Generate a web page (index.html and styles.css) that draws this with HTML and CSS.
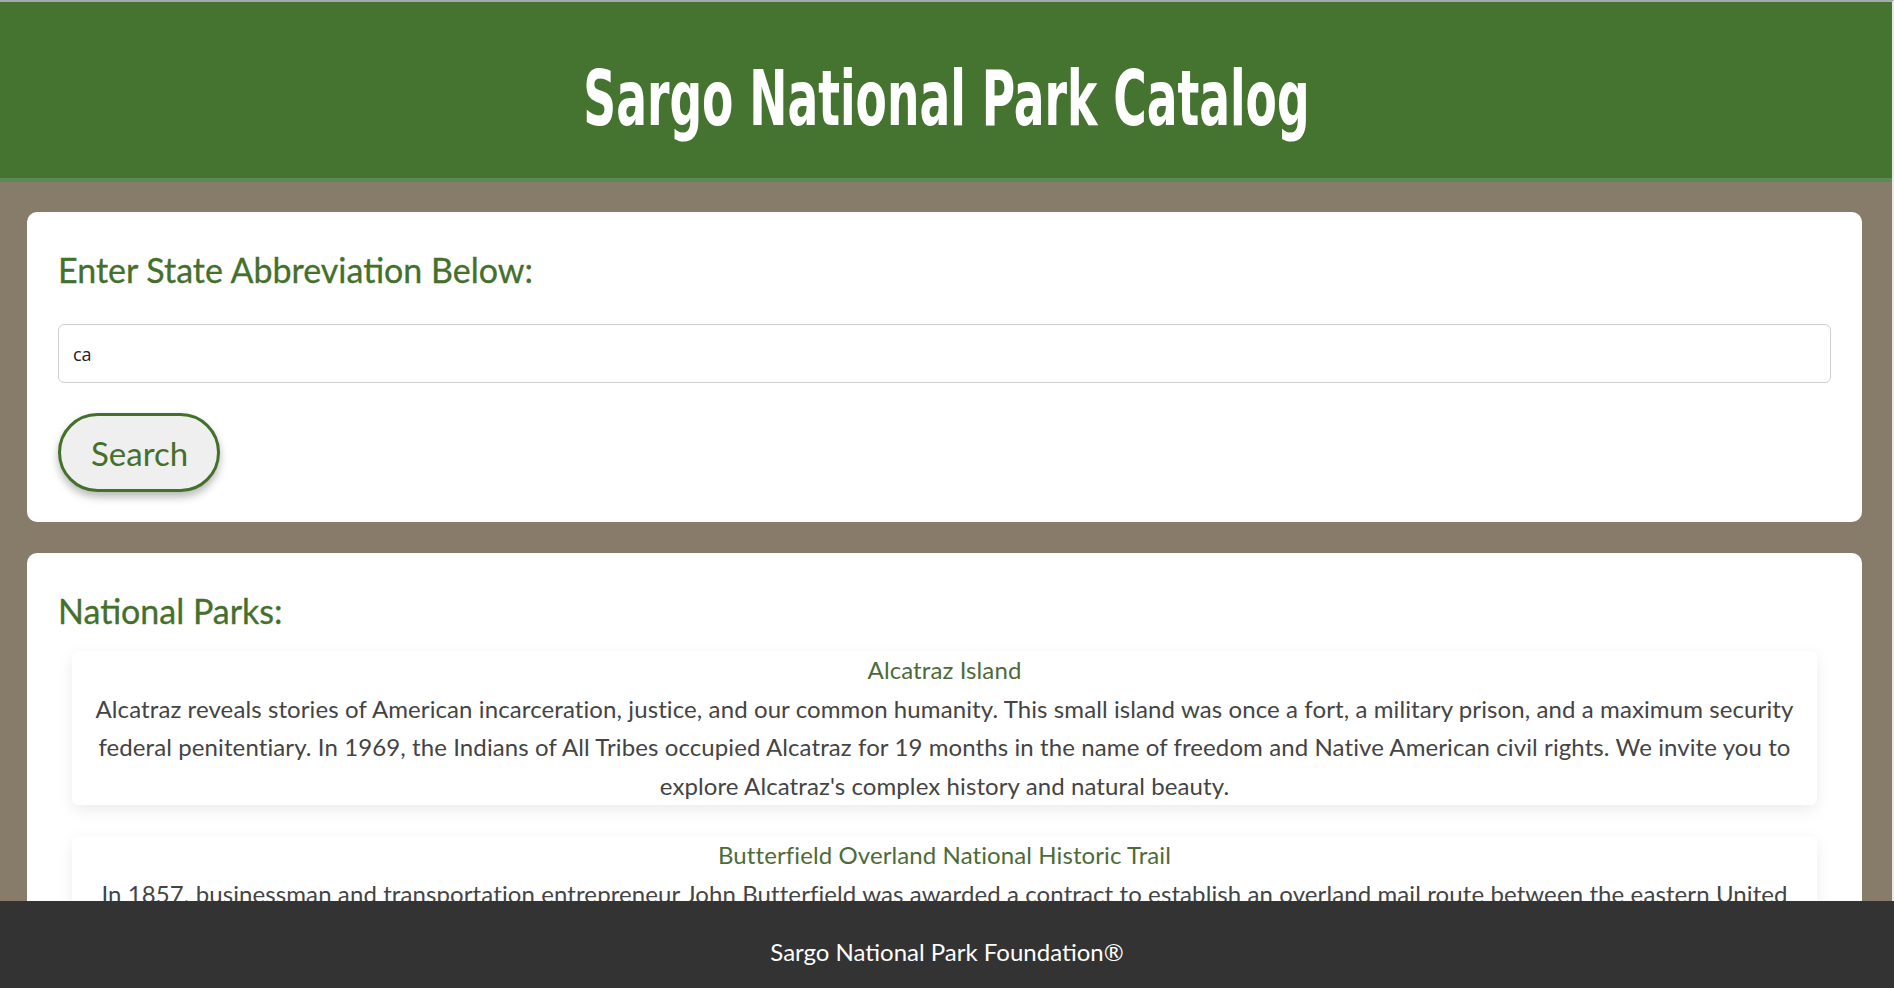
FILE: index.html
```html
<!DOCTYPE html>
<html lang="en">
<head>
<meta charset="utf-8">
<title>Sargo National Park Catalog</title>
<link rel="stylesheet" href="styles.css">
</head>
<body>
<header class="site-header">
  <h1 class="site-title">Sargo National Park Catalog</h1>
</header>
<main class="main">
  <section class="card search-card">
    <h2 class="card-heading search-heading">Enter State Abbreviation Below:</h2>
    <input class="state-input" type="text" value="ca" aria-label="State abbreviation">
    <button class="search-btn" type="button">Search</button>
  </section>
  <section class="card parks-card">
    <h2 class="card-heading parks-heading">National Parks:</h2>
    <ul class="park-list">
      <li class="park-item">
        <div class="park-name">Alcatraz Island</div>
        <p class="park-desc">Alcatraz reveals stories of American incarceration, justice, and our common humanity. This small island was once a fort, a military prison, and a maximum security federal penitentiary. In 1969, the Indians of All Tribes occupied Alcatraz for 19 months in the name of freedom and Native American civil rights. We invite you to explore Alcatraz's complex history and natural beauty.</p>
      </li>
      <li class="park-item">
        <div class="park-name">Butterfield Overland National Historic Trail</div>
        <p class="park-desc">In 1857, businessman and transportation entrepreneur John Butterfield was awarded a contract to establish an overland mail route between the eastern United States and San Francisco, California. Butterfield's Overland Mail Company carried mail and passengers across the frontier for nearly three years.</p>
      </li>
    </ul>
  </section>
</main>
<footer class="site-footer">Sargo National Park Foundation®</footer>
</body>
</html>
```
FILE: styles.css
```css
html {
  background: #877c69;
}
body {
  margin: 0;
  border-top: 2px solid #a6a8ad;
  border-right: 2px solid #ece9e4;
  background: #877c69;
  font-family: Lato, "Open Sans", sans-serif;
  color: #444;
  min-height: 986px;
}
.site-header {
  height: 176px;
  background: #457430;
  border-bottom: 4px solid #5b8a56;
  display: flex;
  align-items: center;
  justify-content: center;
}
.site-title {
  margin: 0;
  padding-top: 18px;
  color: #fff;
  font-family: "Liberation Sans Narrow", "DejaVu Sans Condensed", "Liberation Sans", sans-serif;
  font-weight: 700;
  font-size: 76px;
  line-height: 1;
  transform: scaleX(0.667);
}
.main {
  padding: 30px 30px 120px 27px;
  display: flex;
  flex-direction: column;
  gap: 31px;
}
.card {
  background: #fff;
  border-radius: 10px;
  padding: 31px 31px 30px;
}
.card-heading {
  margin: 0;
  color: #44702c;
  font-size: 34px;
  font-weight: 400;
  line-height: 54px;
  -webkit-text-stroke: 0.3px #44702c;
}
.search-card {
  display: flex;
  flex-direction: column;
  align-items: flex-start;
}
.search-heading {
  margin-bottom: 27px;
}
.state-input {
  box-sizing: border-box;
  width: 100%;
  height: 59px;
  border: 1px solid #cfcfcf;
  border-radius: 6px;
  padding: 0 14px;
  font-family: "Open Sans", sans-serif;
  font-size: 18px;
  color: #222;
  margin-bottom: 30px;
  outline: none;
}
.search-btn {
  box-sizing: border-box;
  height: 79px;
  padding: 0 29px 0 30px;
  border: 3px solid #44702c;
  border-radius: 40px;
  background: #efefef;
  color: #44702c;
  font-family: Lato, sans-serif;
  font-size: 33px;
  box-shadow: 0 5px 8px rgba(0, 0, 0, 0.28);
}
.parks-heading {
  margin-bottom: 13px;
}
.park-list {
  list-style: none;
  margin: 0 14px;
  padding: 0;
  display: flex;
  flex-direction: column;
  gap: 31px;
}
.park-item {
  background: #fff;
  border-radius: 6px;
  box-shadow: 0 5px 16px rgba(0, 0, 0, 0.08);
  text-align: center;
  font-size: 24px;
  line-height: 38.5px;
  letter-spacing: 0.1px;
  padding: 0 14px;
}
.park-name {
  color: #4d6b38;
}
.park-desc {
  margin: 0;
  color: #444;
}
.site-footer {
  position: fixed;
  left: 0;
  right: 0;
  bottom: 0;
  height: 87px;
  box-sizing: border-box;
  padding-top: 36px;
  background: #333;
  color: #fff;
  text-align: center;
  font-size: 24px;
  line-height: 30px;
}
```
